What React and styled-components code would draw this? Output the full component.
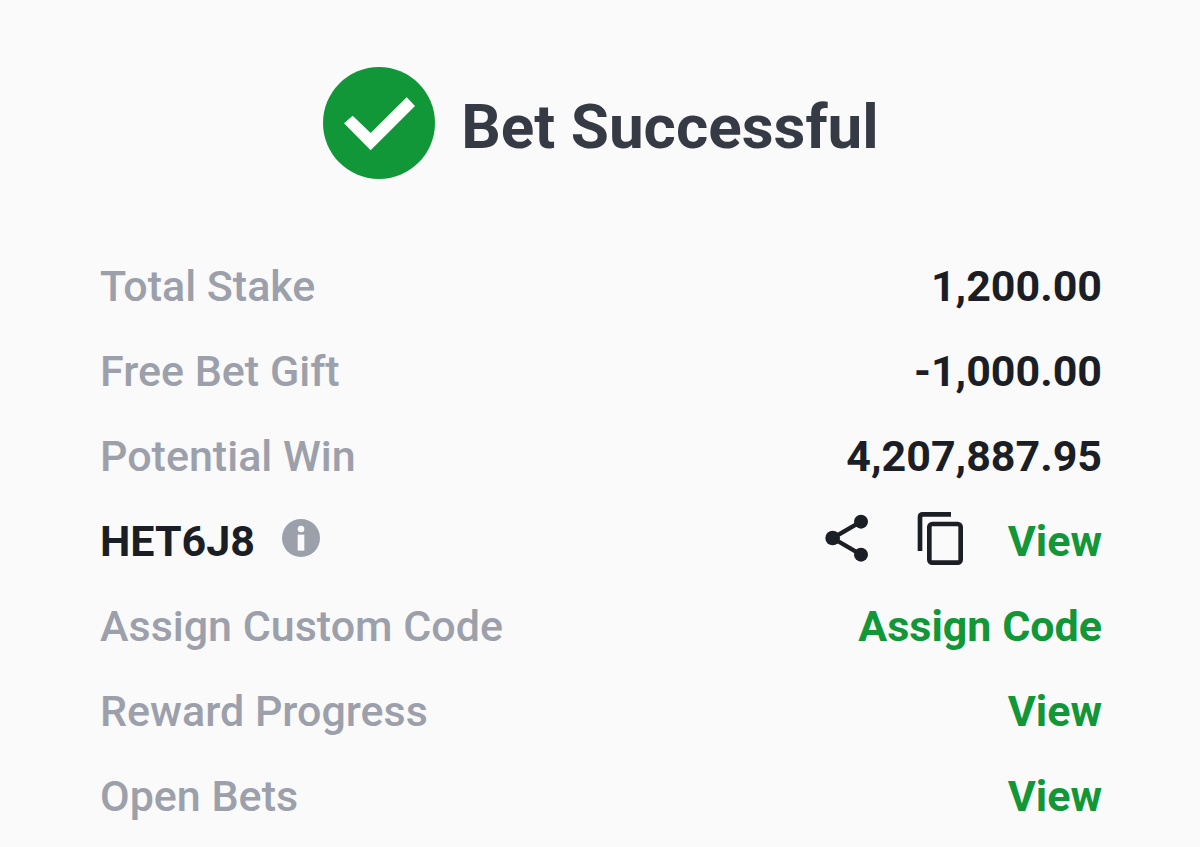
import styled, { createGlobalStyle } from 'styled-components';

const GlobalStyle = createGlobalStyle`
  :root {
    --background: #fafafa;
    --heading: #353a45;
    --text: #1b1e25;
    --muted: #9ca0ab;
    --green: #119737;
  }

  body {
    margin: 0;
    background-color: var(--background);
    color: var(--text);
    font-family: Roboto, 'Liberation Sans', sans-serif;
  }
`;

const StyledReceipt = styled.main`
  padding: 63px 98px 8px 100px;
`;

const StyledHeader = styled.header`
  display: flex;
  align-items: center;
  justify-content: center;
  gap: 26px;
  height: 120px;

  h1 {
    margin: 8px 0 0;
    color: var(--heading);
    font-size: 62px;
    font-weight: 700;
    line-height: 72px;
  }
`;

const StyledRows = styled.dl`
  margin: 60px 0 0;
`;

const StyledRow = styled.div`
  display: flex;
  align-items: center;
  justify-content: space-between;
  height: 85px;
  font-size: 43px;
  line-height: 50px;
`;

const StyledLabel = styled.dt`
  display: flex;
  align-items: center;
  gap: 27px;
  color: ${({ $strong }) => ($strong ? 'var(--text)' : 'var(--muted)')};
  font-weight: ${({ $strong }) => ($strong ? 700 : 500)};
`;

const StyledValue = styled.dd`
  display: flex;
  align-items: center;
  margin: 0;
  font-weight: 700;
`;

const StyledLink = styled.a`
  color: var(--green);
  text-decoration: none;

  &:hover {
    text-decoration: underline;
  }
`;

const StyledIconButton = styled.button`
  display: flex;
  margin: 0 ${({ $gap }) => $gap || 0}px 6px 0;
  padding: 0;
  border: 0;
  background: none;
  color: inherit;
  cursor: pointer;
`;

function CheckIcon() {
  return (
    <svg width="112" height="112" viewBox="0 0 336 336" aria-hidden="true">
      <circle cx="168" cy="168" r="168" fill="#119737" />
      <path d="M63 169l26-23 54 52L251 91l25 26-133 133z" fill="#fff" />
    </svg>
  );
}

function InfoIcon() {
  return (
    <svg width="38" height="38" viewBox="0 0 114 114" aria-hidden="true">
      <circle cx="57" cy="57" r="57" fill="#9ca0ab" />
      <circle cx="57" cy="30" r="10" fill="#fafafa" />
      <path d="M47 47h20v48H47z" fill="#fafafa" />
    </svg>
  );
}

function ShareIcon() {
  return (
    <svg width="44" height="48" viewBox="0 0 132 144" aria-hidden="true">
      <path d="M108 23L23 72l85 50" fill="none" stroke="currentColor" strokeWidth="13" />
      <g fill="currentColor">
        <circle cx="108" cy="23" r="21" />
        <circle cx="23" cy="72" r="22" />
        <circle cx="108" cy="122" r="21" />
      </g>
    </svg>
  );
}

function CopyIcon() {
  return (
    <svg width="47" height="54" viewBox="0 0 141 162" aria-hidden="true">
      <g fill="none" stroke="currentColor" strokeWidth="14">
        <path d="M9 120V19q0-9 9-9h84" />
        <rect x="37" y="39" width="94" height="116" rx="9" />
      </g>
    </svg>
  );
}

function Row({ label, strong, info, children }) {
  return (
    <StyledRow>
      <StyledLabel $strong={strong}>
        {label}
        {info && (
          <StyledIconButton type="button" aria-label="Booking code info">
            <InfoIcon />
          </StyledIconButton>
        )}
      </StyledLabel>
      <StyledValue>{children}</StyledValue>
    </StyledRow>
  );
}

export default function App() {
  return (
    <>
      <GlobalStyle />
      <StyledReceipt>
        <StyledHeader>
          <CheckIcon />
          <h1>Bet Successful</h1>
        </StyledHeader>
        <StyledRows>
          <Row label="Total Stake">1,200.00</Row>
          <Row label="Free Bet Gift">-1,000.00</Row>
          <Row label="Potential Win">4,207,887.95</Row>
          <Row label="HET6J8" strong info>
            <StyledIconButton type="button" aria-label="Share" $gap={48}>
              <ShareIcon />
            </StyledIconButton>
            <StyledIconButton type="button" aria-label="Copy" $gap={44}>
              <CopyIcon />
            </StyledIconButton>
            <StyledLink href="#booking">View</StyledLink>
          </Row>
          <Row label="Assign Custom Code">
            <StyledLink href="#assign">Assign Code</StyledLink>
          </Row>
          <Row label="Reward Progress">
            <StyledLink href="#rewards">View</StyledLink>
          </Row>
          <Row label="Open Bets">
            <StyledLink href="#bets">View</StyledLink>
          </Row>
        </StyledRows>
      </StyledReceipt>
    </>
  );
}
